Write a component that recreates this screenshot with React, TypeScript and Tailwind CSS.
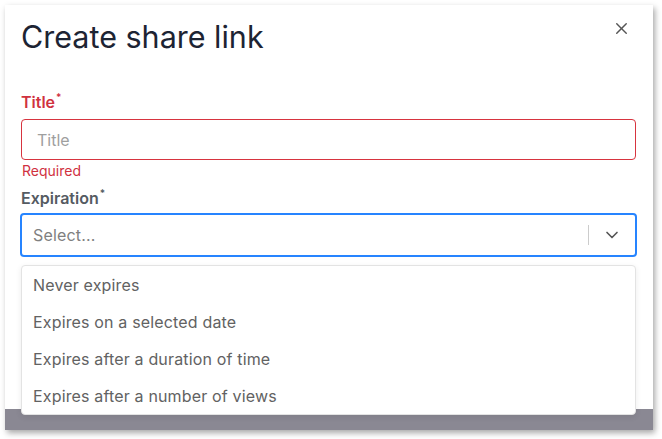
import { X, ChevronDown } from "lucide-react";

const options = [
  "Never expires",
  "Expires on a selected date",
  "Expires after a duration of time",
  "Expires after a number of views",
];

export default function App() {
  return (
    <div className="min-h-screen bg-white p-[5px] font-['Inter',sans-serif]">
      <div className="relative flex h-[425px] w-[648px] flex-col bg-white shadow-[2px_3px_6px_rgba(0,0,0,0.35)]">
        {/* Dialog body */}
        <div className="flex-1 px-4 pt-[13px]">
          <div className="flex items-start justify-between">
            <h2 className="text-[30.5px] leading-[38px] text-[#1d2433]">Create share link</h2>
            <button className="mr-[6px] mt-[1px] text-[#555]">
              <X className="h-[19px] w-[19px]" strokeWidth={1.8} />
            </button>
          </div>

          {/* Title field */}
          <div className="mt-[36px]">
            <label className="flex text-[16px] font-semibold leading-[20px] text-[#d0313f]">
              Title<span className="ml-[1px] text-[10px] leading-[10px]">*</span>
            </label>
            <div className="mt-[7px] flex h-[41px] w-[615px] items-center rounded-[4px] border border-[#d7343f] px-[15px] text-[16px] text-[#9f9f9f]">
              Title
            </div>
            <div className="mt-[1px] pl-[1px] text-[14px] leading-[20px] text-[#d0313f]">Required</div>
          </div>

          {/* Expiration field */}
          <div className="mt-[7px]">
            <label className="flex text-[16px] font-semibold leading-[20px] text-[#555b62]">
              Expiration<span className="ml-[1px] text-[10px] leading-[10px]">*</span>
            </label>
            <div className="-ml-[1px] mt-[5px] flex h-[44px] w-[617px] items-center rounded-[4px] border-2 border-[#2684ff] pl-[11px] text-[16px] tracking-[0.01em] text-[#808080]">
              <span className="flex-1">Select...</span>
              <span className="h-[20px] w-px bg-[#cccccc]" />
              <span className="flex w-[46px] justify-center text-[#555]">
                <ChevronDown className="h-[20px] w-[20px]" strokeWidth={2} />
              </span>
            </div>
          </div>
        </div>

        {/* Overlay strip */}
        <div className="h-[21px] bg-[#8a8893]" />

        {/* Dropdown menu */}
        <div className="absolute left-4 top-[260px] w-[615px] rounded-[4px] border border-[#e3e3e3] bg-white shadow-[0_2px_6px_rgba(0,0,0,0.08)]">
          {options.map((o) => (
            <div key={o} className="flex h-[37px] items-center px-[11px] text-[16px] tracking-[0.01em] text-[#626262]">
              {o}
            </div>
          ))}
        </div>
      </div>
    </div>
  );
}
